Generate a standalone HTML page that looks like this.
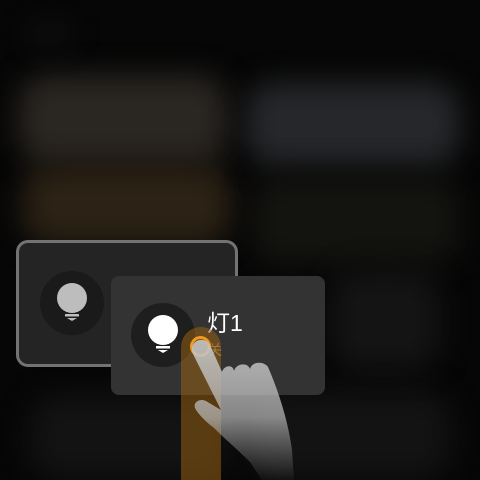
<!DOCTYPE html>
<html><head><meta charset="utf-8"><style>
html,body{margin:0;padding:0;width:480px;height:480px;overflow:hidden;background:#050505;font-family:"Liberation Sans","Noto Sans CJK SC",sans-serif}
.b{position:absolute;filter:blur(14px);border-radius:30px}
</style></head><body>
<div style="position:absolute;inset:0;background:#060606"></div>
<div class="b" style="left:18px;top:75px;width:210px;height:90px;background:#2a2622"></div>
<div class="b" style="left:22px;top:165px;width:210px;height:80px;background:#2c2215"></div>
<div class="b" style="left:245px;top:82px;width:215px;height:85px;background:#25272a"></div>
<div class="b" style="left:250px;top:175px;width:210px;height:90px;background:#131310"></div>
<div class="b" style="left:30px;top:395px;width:200px;height:85px;background:#131313"></div>
<div class="b" style="left:250px;top:390px;width:200px;height:90px;background:#131313"></div>
<div class="b" style="left:330px;top:270px;width:110px;height:100px;background:#141414"></div>
<div class="b" style="left:30px;top:25px;width:40px;height:20px;background:#131313;border-radius:50%"></div>

<div style="position:absolute;left:16px;top:240px;width:216px;height:121px;border:3px solid #737373;border-radius:12px;background:#242424"></div>
<div style="position:absolute;left:40px;top:271px;width:64px;height:64px;border-radius:50%;background:#1a1a1a"></div>
<svg style="position:absolute;left:52px;top:283px" width="40" height="40" viewBox="0 0 40 40">
<circle cx="20" cy="15" r="15" fill="#bdbdbd"/><rect x="14" y="22" width="12" height="7" fill="#bdbdbd"/>
<rect x="13" y="31" width="14" height="2.5" fill="#bdbdbd"/><path d="M15 35h10l-5 3z" fill="#bdbdbd"/></svg>

<div style="position:absolute;left:111px;top:276px;width:214px;height:119px;border-radius:8px;background:#333"></div>
<div style="position:absolute;left:131px;top:303px;width:64px;height:64px;border-radius:50%;background:#1e1e1e"></div>
<svg style="position:absolute;left:143px;top:315px" width="40" height="40" viewBox="0 0 40 40">
<circle cx="20" cy="15" r="15" fill="#fff"/><rect x="14" y="22" width="12" height="7" fill="#fff"/>
<rect x="13" y="31" width="14" height="2.5" fill="#fff"/><path d="M15 35h10l-5 3z" fill="#fff"/></svg>
<div style="position:absolute;left:207px;top:308px;color:#fff;font-size:23px;line-height:30px">灯1</div>
<div style="position:absolute;left:208px;top:341px;color:#b89a6a;font-size:14px;line-height:18px">关</div>

<div style="position:absolute;left:181px;top:327px;width:40px;height:153px;border-radius:20px 20px 0 0;background:rgba(150,95,20,0.55)"></div>
<div style="position:absolute;left:190px;top:336px;width:15px;height:15px;border-radius:50%;border:3px solid #f39a1c"></div>
<svg style="position:absolute;left:0;top:0" width="480" height="480">
<defs><linearGradient id="g" x1="0" y1="340" x2="0" y2="480" gradientUnits="userSpaceOnUse">
<stop offset="0" stop-color="#c4c4c4" stop-opacity=".92"/><stop offset=".55" stop-color="#bbb" stop-opacity=".7"/><stop offset="1" stop-color="#999" stop-opacity=".05"/></linearGradient></defs>
<path d="M193 354 C189 344 198 337 206 341 C210 343 212 350 215 356 L222 372 C224 365 233 364 234 371 C236 363 248 362 250 369 C252 361 264 361 268 367 C278 390 288 420 292 450 L294 480 L262 480 L250 462 C238 450 226 440 214 428 C206 422 198 414 195 408 C193 402 200 398 206 401 L221 410 Z" fill="url(#g)"/>
</svg>
</body></html>
